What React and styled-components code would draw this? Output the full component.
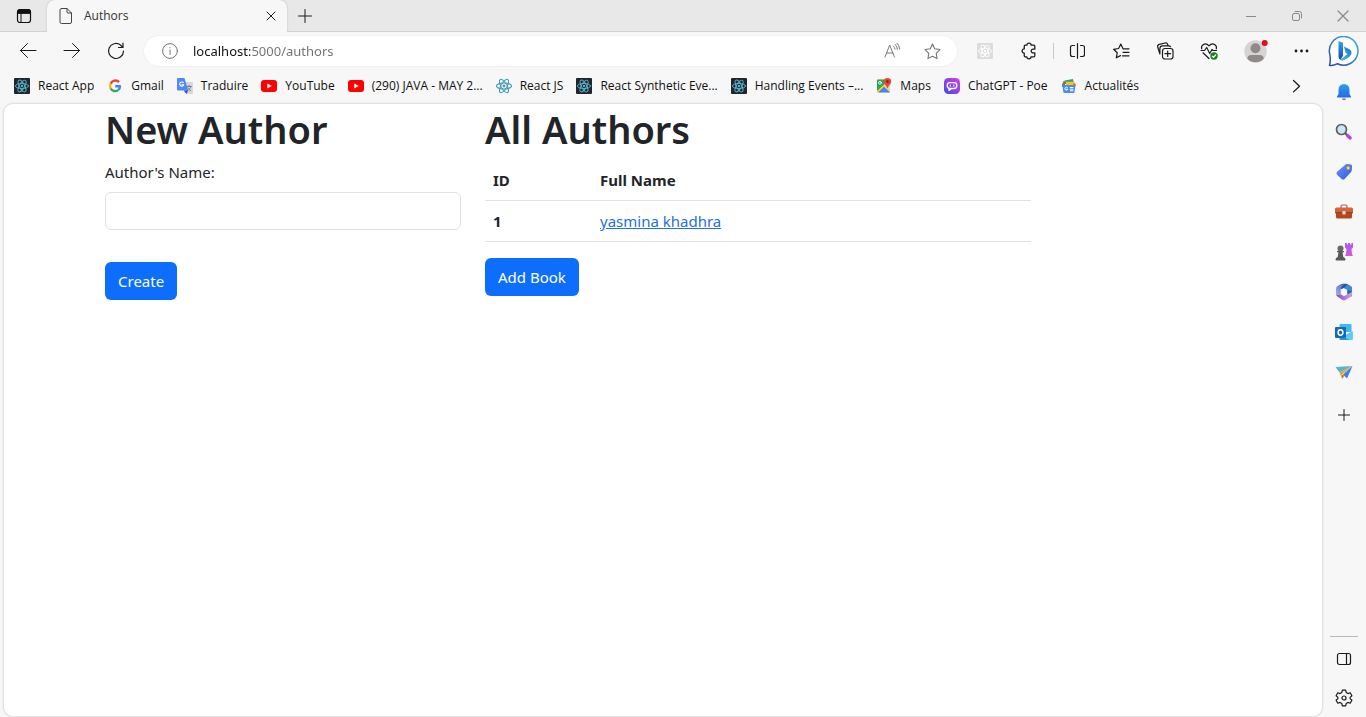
import React, { useState } from "react";
import styled, { createGlobalStyle } from "styled-components";

const GlobalStyle = createGlobalStyle`
  *, *::before, *::after { box-sizing: border-box; }
  body {
    margin: 0;
    background: #f7f7f7;
    font-family: "Noto Sans", "Open Sans", sans-serif;
    color: #212529;
  }
  button, input { font: inherit; color: inherit; }
`;

/* ---------- browser frame ---------- */

const Window = styled.div`
  display: flex;
  flex-direction: column;
  min-height: 100vh;
`;

const TitleBar = styled.header`
  display: flex;
  height: 32px;
  background: #e8e8e8;
  box-shadow: inset 0 -1px 0 #d3d3d3;
`;

const IconButton = styled.button`
  display: inline-flex;
  align-items: center;
  justify-content: center;
  flex: none;
  width: ${(p) => p.$width || 44}px;
  height: ${(p) => p.$height || 40}px;
  padding: 0;
  border: 0;
  background: none;
  color: ${(p) => p.$color || "#1b1b1b"};
`;

const Tab = styled.div`
  display: flex;
  align-items: center;
  width: 240px;
  padding: 0 4px 0 11px;
  border-radius: 8px 8px 0 0;
  background: #f7f7f7;
  box-shadow: 0 0 2px #b5b5b5;
  clip-path: inset(0 -3px 0 -3px);
`;

const TabTitle = styled.span`
  flex: 1;
  padding-left: 10px;
  font-family: "Open Sans", sans-serif;
  font-size: 12px;
  line-height: 16px;
  color: #333;
`;

const WindowControls = styled.div`
  display: flex;
  margin-left: auto;
`;

const Body = styled.div`
  display: flex;
  flex: 1;
`;

const Main = styled.div`
  display: flex;
  flex-direction: column;
  flex: 1;
  min-width: 0;
`;

const Toolbar = styled.nav`
  display: flex;
  align-items: center;
  height: 38px;
  padding-left: 6px;
`;

const AddressBar = styled.div`
  display: flex;
  align-items: center;
  flex: 1;
  min-width: 0;
  height: 30px;
  margin: 0 6px;
  padding: 0 5px 0 18px;
  border-radius: 15px;
  background: #fff;
  box-shadow: 0 0 2px #e2e2e2;
`;

const AddressInput = styled.input`
  flex: 1;
  min-width: 0;
  margin-left: 15px;
  padding: 0;
  border: 0;
  outline: 0;
  font-size: 13px;
  line-height: 20px;
  color: transparent;
  background: linear-gradient(to right, #111 57px, #707070 57px);
  background-clip: text;
`;

const Divider = styled.span`
  width: 1px;
  height: 16px;
  margin: 0 1px 0 2px;
  background: #c8c8c8;
`;

const Bookmarks = styled.nav`
  display: flex;
  align-items: center;
  height: 33px;
  padding: 0 5px 2px 14px;
  gap: 13px;
`;

const Bookmark = styled.a`
  display: flex;
  align-items: center;
  gap: 8px;
  font-family: "Open Sans", sans-serif;
  font-size: 12px;
  line-height: 16px;
  white-space: nowrap;
  color: #111;
  text-decoration: none;
`;

const More = styled.div`
  margin-left: auto;
`;

const Sidebar = styled.aside`
  display: flex;
  flex-direction: column;
  flex: none;
  width: 43px;
`;

const SidebarAdd = styled.div`
  margin-top: 3px;
`;

const SidebarFoot = styled.div`
  display: flex;
  flex-direction: column;
  width: 28px;
  margin: auto 0 0 7px;
  padding-top: 2px;
  border-top: 1px solid #b9b9b9;
  align-items: center;
`;

/* ---------- web page ---------- */

const Viewport = styled.main`
  flex: 1;
  margin-left: 3px;
  border: 1px solid #e2e2e2;
  border-radius: 10px;
  background: #fff;
  box-shadow: 0 0 2px #dedede;
`;

const Container = styled.div`
  display: grid;
  grid-template-columns: 4fr 6fr 2fr;
  max-width: 1140px;
  margin: 0 auto;
`;

const Column = styled.section`
  padding: 0 12px;
`;

const Heading = styled.h1`
  margin: 2px 0 8px;
  font-size: 38px;
  line-height: 46px;
  font-weight: 600;
`;

const Field = styled.div`
  margin-bottom: 32px;
`;

const Label = styled.label`
  display: block;
  margin-bottom: 8px;
  font-size: 15px;
  line-height: 24px;
`;

const TextInput = styled.input`
  display: block;
  width: 100%;
  height: 38px;
  padding: 6px 12px;
  border: 1px solid #dee2e6;
  border-radius: 6px;
  background: #fff;
  font-size: 15px;
`;

const PrimaryButton = styled.button`
  height: 38px;
  padding: 0 13px;
  border: 0;
  border-radius: 6px;
  background: #0d6efd;
  color: #fff;
  font-size: 15px;
  line-height: 24px;
`;

const Table = styled.table`
  width: 100%;
  margin-bottom: 16px;
  border-collapse: collapse;
  table-layout: fixed;
  font-size: 15px;
  line-height: 24px;
`;

const Cell = styled.td`
  width: ${(p) => (p.$narrow ? "107px" : "auto")};
  padding: 8px;
  border-bottom: 1px solid #dee2e6;
  text-align: left;
`;

const AuthorLink = styled.a`
  color: #2470dc;
  text-decoration: underline;
`;

/* ---------- icons ---------- */

function Icon({ size = 16, box = 16, children, ...rest }) {
  return (
    <svg
      width={size}
      height={size}
      viewBox={`0 0 ${box} ${box}`}
      fill="none"
      stroke="currentColor"
      strokeWidth="1"
      strokeLinecap="round"
      strokeLinejoin="round"
      aria-hidden="true"
      {...rest}
    >
      {children}
    </svg>
  );
}

const Atom = ({ color, width = 0.9 }) => (
  <g stroke={color} strokeWidth={width}>
    <ellipse cx="8" cy="8" rx="6.6" ry="2.6" />
    <ellipse cx="8" cy="8" rx="6.6" ry="2.6" transform="rotate(60 8 8)" />
    <ellipse cx="8" cy="8" rx="6.6" ry="2.6" transform="rotate(120 8 8)" />
    <circle cx="8" cy="8" r="1.2" fill={color} stroke="none" />
  </g>
);

const ReactTile = ({ tile = "#20262b", color = "#58b7cf" }) => (
  <Icon>
    <rect width="16" height="16" rx="1" fill={tile} stroke="none" />
    <Atom color={color} />
  </Icon>
);

const ReactPlain = () => (
  <Icon>
    <g stroke="#4a9cb5" strokeWidth="1.1">
      <ellipse cx="8" cy="8" rx="7.5" ry="3" />
      <ellipse cx="8" cy="8" rx="7.5" ry="3" transform="rotate(60 8 8)" />
      <ellipse cx="8" cy="8" rx="7.5" ry="3" transform="rotate(120 8 8)" />
      <circle cx="8" cy="8" r="1.4" fill="#4a9cb5" stroke="none" />
    </g>
  </Icon>
);

const Google = () => (
  <Icon strokeWidth="2.4" strokeLinecap="butt">
    <path d="M12 4.1A5 5 0 0 0 3.7 5.7" stroke="#ea4335" />
    <path d="M3.7 5.7a5 5 0 0 0 0 4.8" stroke="#fbbc05" />
    <path d="M3.7 10.5a5 5 0 0 0 7.4 1.6" stroke="#34a853" />
    <path d="M11.1 12.1A5 5 0 0 0 13 8.2H8.2" stroke="#4285f4" />
  </Icon>
);

const Translate = () => (
  <Icon>
    <path d="M7 4h8.3q.7 0 .7.7v10.6q0 .7-.7.7H9.5z" fill="#d5d8dc" stroke="none" />
    <path d="M9.5 8.5h5M12 7.2v1.3M13.8 8.6c-.5 2-2 3.3-3.4 4M10.8 9.8c.7 1.4 1.8 2.3 3 3" stroke="#6d7c8c" strokeWidth=".9" />
    <path d="M1 0h6.5l3.7 12.5H1q-1 0-1-1V1q0-1 1-1z" fill="#4c8bf5" stroke="none" />
    <path d="M6.6 12.5h4.6L9.5 16z" fill="#2f4fd8" stroke="none" />
    <path d="M6.4 4.7A2.1 2.1 0 1 0 6.8 6.7H4.9" stroke="#fff" strokeWidth="1.1" />
  </Icon>
);

const YouTube = () => (
  <Icon>
    <rect y="2" width="16" height="12" rx="3" fill="#f00" stroke="none" />
    <path d="M6.3 5.4v5.2L10.8 8z" fill="#fff" stroke="none" />
  </Icon>
);

const MapsIcon = () => (
  <Icon stroke="none">
    <path d="M2 1.5h11q1 0 1 1v11q0 1-1 1H2q-1 0-1-1v-11q0-1 1-1z" fill="#fbce3c" />
    <path d="M2 1.5h8.5L8.5 6 1 13V2.5q0-1 1-1z" fill="#2aa55b" />
    <path d="M11.5 7 14 9.5v4L9 8.5z" fill="#d8dadd" />
    <path d="m2 14.5 6-5.700 6 5.700z" fill="#4384f3" />
    <circle cx="4" cy="4.8" r="1.4" fill="none" stroke="#fff" strokeWidth=".9" />
    <path d="M11.5 0a3.7 3.7 0 0 1 3.7 3.700c0 2.800-2.900 3.300-3.400 6.500h-.6C10.700 7 7.800 6.500 7.800 3.700A3.700 3.700 0 0 1 11.500 0z" fill="#de4a3c" />
    <circle cx="11.5" cy="3.6" r="1.3" fill="#7d211b" />
  </Icon>
);

const Poe = () => (
  <Icon>
    <defs>
      <linearGradient id="poe" x1="0" y1="1" x2="1" y2="0">
        <stop offset="0" stopColor="#3e4fe0" />
        <stop offset=".5" stopColor="#8f41e8" />
        <stop offset="1" stopColor="#d343dc" />
      </linearGradient>
    </defs>
    <rect width="16" height="16" rx="4.5" fill="url(#poe)" stroke="none" />
    <rect x="3.2" y="4.7" width="9.6" height="5.8" rx="2.7" stroke="#fff" strokeWidth="1.3" />
    <path d="M6.3 7.1v1M9.7 7.1v1M5 11v1.6l2-1.6" stroke="#fff" strokeWidth="1.2" />
  </Icon>
);

const News = () => (
  <Icon stroke="none">
    <path d="M2 6V3.5L5 3v3z" fill="#e5483a" />
    <path d="m3.5 2.5 8.5-1.500 1 5H4z" fill="#2fa65a" />
    <path d="M5 3.8h8.500V7H5z" fill="#fbc02f" />
    <path d="M1 5.500h3V9H1z" fill="#3c9c5c" />
    <path d="M12.500 5.500h2V8h-2z" fill="#e5483a" />
    <path d="M1.500 7h13L13.500 14q-.2 1-1 1h-9q-1 0-1.200-1z" fill="#4b89ee" />
    <path d="M6.600 9.700a1.500 1.500 0 1 0 .2 1.600H5.500M9.300 9.500H12M9.300 11.200H12M9.300 12.800H12" fill="none" stroke="#fff" />
  </Icon>
);

const Workspaces = () => (
  <Icon>
    <rect x="1.5" y="1.5" width="13" height="13" rx="2.5" stroke="#111" strokeWidth="1.2" />
    <path d="M1.5 5V4q0-2.500 2.500-2.500h8q2.500 0 2.500 2.500v1z" fill="#111" stroke="#111" />
    <path d="M5 5v9.300" stroke="#111" />
  </Icon>
);

const FileIcon = () => (
  <Icon stroke="#444">
    <path d="M3.500.5h5.500l4.500 4.500v9q0 1.500-1.500 1.500H3.500Q2 15.500 2 14V2Q2 .5 3.500.5zM9 .5V4q0 1 1 1h3.500" />
  </Icon>
);

const Close = ({ size = 16 }) => (
  <Icon size={size}><path d="m4 4 8 8M12 4l-8 8" /></Icon>
);
const Plus = () => <Icon><path d="M8 1.500v13M1.500 8h13" /></Icon>;
const SmallPlus = () => <Icon><path d="M8 2.500v11M2.500 8h11" /></Icon>;
const Back = () => <Icon size={18} box={18}><path d="M17 8.500H1.500M8.500 1.500l-7 7 7 7" /></Icon>;
const Forward = () => <Icon size={18} box={18}><path d="M1 8.500h15.500M9.500 1.500l7 7-7 7" /></Icon>;
const Reload = () => (
  <Icon size={18} box={18} strokeWidth="1.2"><path d="M16.500 9A7.500 7.500 0 1 1 13.500 3l2.200 2.300M16 1v4.500h-4.500" /></Icon>
);
const Info = () => (
  <Icon size={16} stroke="#747474"><circle cx="8" cy="8" r="7.4" /><path d="M8 7v4.500M8 4.600v.2" /></Icon>
);
const ReadAloud = () => (
  <Icon size={18} box={18} stroke="#777"><path d="m2 15 4.700-12L11.400 15M3.500 11h6.400M10.500 4q1.400 1.200 1.500 3.200M12.300 2.500q2 1.900 2.100 4.900M14 1.200q2.500 2.300 2.600 5.800" /></Icon>
);
const star = "m8 1 2.100 4.500 4.900.7-3.500 3.500.8 5L8 12.400l-4.300 2.300.8-5L1 6.200l4.900-.7z";
const Star = () => <Icon size={17} stroke="#747474"><path d={star} /></Icon>;
const Puzzle = () => (
  <Icon size={18} box={17} strokeWidth="1.2">
    <path d="M5 3h1.500a2 2 0 1 1 4 0H13q1 0 1 1v2.800h-1.200a1.800 1.800 0 1 0 0 3.500H14V13q0 1-1 1h-2.600a2 2 0 1 1-4 0H5q-1 0-1-1v-2.500a2 2 0 1 1 0-4V4q0-1 1-1z" />
  </Icon>
);
const Split = () => (
  <Icon strokeWidth="1.2"><path d="M8.500.7v14.600M5.500 2.500h-2Q1.500 2.500 1.500 4.500v7q0 2 2 2h2M11.500 2.500h2q2 0 2 2v7q0 2-2 2h-2" /></Icon>
);
const Favorites = () => (
  <Icon size={18} box={18} strokeWidth="1.2"><path d="M17 6.800h-6L8.800 2 6.600 6.500l-5 .8 3.600 3.500-.9 5 4.200-2.200M11 10.300h6M10.500 13.800H17" /></Icon>
);
const Collections = () => (
  <Icon size={18} box={18} strokeWidth="1.2">
    <rect x="6.5" y="6.5" width="10.5" height="10.5" rx="2.5" />
    <path d="M11.700 9v5.500M9 11.700h5.500M3.900 12 1.700 5Q1.200 3 3.200 2.400l6-1.400q1.900-.3 2.500 1.500l.3 1M3.900 12V6.500q0-2.700 2.700-2.700h6.100q1.300 0 1.800.9" />
  </Icon>
);
const Health = () => (
  <Icon size={18} box={18} strokeWidth="1.2">
    <path d="M1.700 6.800C.7 3.500 5-.5 9 3.800c4-4.300 8.300-.3 7.300 3M1 8.500h3.500L6.700 5.500l3 6L12 7.500l1 1h3.500M3 10.800l6 5.700" />
    <circle cx="14" cy="14" r="3.7" fill="#16801a" stroke="none" />
    <path d="m12.400 14.200 1.200 1.100 2-2.300" stroke="#fff" />
  </Icon>
);
const Profile = () => (
  <Icon size={26} box={26} stroke="none">
    <circle cx="13.5" cy="13.5" r="11.2" fill="#d6d4d3" />
    <circle cx="13.5" cy="10.3" r="5" fill="#8d8a89" />
    <path d="M5.300 20.800q.3-3.700 4-3.700h8.400q3.700 0 4 3.700a11.200 11.200 0 0 1-16.400 0z" fill="#8d8a89" />
    <circle cx="22.7" cy="5" r="3" fill="#e20b16" />
  </Icon>
);
const Dots = () => (
  <Icon stroke="none" fill="currentColor"><circle cx="3" cy="8" r="1.4" /><circle cx="8.5" cy="8" r="1.4" /><circle cx="14" cy="8" r="1.4" /></Icon>
);
const Chevron = () => <Icon strokeWidth="1.3"><path d="m5.500 2.500 6 5.700-6 5.700" /></Icon>;
const Minimize = () => <Icon><path d="M3 8.500h10" strokeLinecap="butt" /></Icon>;
const Restore = () => (
  <Icon><rect x="3.5" y="5.5" width="7" height="7" rx="1.5" /><path d="M6 3.500h4.500q2 0 2 2V10" /></Icon>
);

const Bing = () => (
  <Icon size={32} box={32}>
    <defs>
      <linearGradient id="ring" x1="1" y1="0" x2="0" y2="1">
        <stop offset="0" stopColor="#38b4e5" /><stop offset="1" stopColor="#2746a6" />
      </linearGradient>
      <linearGradient id="bstem" x1="0" y1="0" x2="0" y2="1">
        <stop offset="0" stopColor="#2ba8ee" /><stop offset="1" stopColor="#1740bd" />
      </linearGradient>
      <linearGradient id="bbowl" x1="1" y1="0" x2="0" y2="1">
        <stop offset="0" stopColor="#2369d8" /><stop offset="1" stopColor="#35d1c9" />
      </linearGradient>
    </defs>
    <path d="M16 .5a14.300 14.300 0 1 1-6.500 27.200Q5 30 1.500 29.300 2.800 26 2 19A14.300 14.300 0 0 1 16 .5z" fill="#fff" stroke="url(#ring)" strokeWidth="1.5" />
    <path d="m10.500 5 4.500 1.800V19.500l-2.300 4.200Q10.500 23 10.500 20.500z" fill="url(#bstem)" stroke="none" />
    <path d="m16 10.500 5.500 2.700q2.800 1.600 1.700 5.100-.7 2-3 3.400l-4.500 2.600q-1.800.9-3.500-.3L19.500 18l-2-1.200z" fill="url(#bbowl)" stroke="none" />
  </Icon>
);

const Bell = () => (
  <Icon size={18} box={18} stroke="none">
    <defs><linearGradient id="bell" x1="0" y1="0" x2="0" y2="1"><stop offset="0" stopColor="#28a1e9" /><stop offset="1" stopColor="#2867e5" /></linearGradient></defs>
    <path d="M9 1a5.500 5.500 0 0 1 5.500 5.500v4.500l1.500 2.500q.3 1-.7 1H2.700q-1 0-.7-1L3.500 11V6.500A5.500 5.500 0 0 1 9 1z" fill="url(#bell)" />
    <path d="M6.800 15.500h4.400Q10.500 17.200 9 17.200t-2.200-1.700z" fill="#697681" />
  </Icon>
);
const Search = () => (
  <Icon size={18} box={18}>
    <path d="m10.500 10.500 1.700 1.700" stroke="#555" strokeWidth="2" />
    <path d="m12.500 12.500 2.700 2.500" stroke="#bb3edf" strokeWidth="3.2" />
    <circle cx="6.500" cy="6.500" r="5" fill="#c9e7f8" stroke="#5b6064" strokeWidth="1.7" />
  </Icon>
);
const Tag = () => (
  <Icon size={18} box={18} stroke="none">
    <defs><linearGradient id="tag" x1="0" y1="0" x2="1" y2="1"><stop offset="0" stopColor="#6b97ff" /><stop offset="1" stopColor="#3157dc" /></linearGradient></defs>
    <path d="M10 2q1-1 2.300-.9l3.500.4q1.200.1 1.200 1.400L16.800 7q0 1.200-1 2.200l-6 6.500q-1.600 1.700-3.200.2l-4.500-4.100q-1.500-1.500 0-3z" fill="url(#tag)" />
    <circle cx="13.3" cy="5" r="1.7" fill="#ffe27b" stroke="#bb8a28" strokeWidth=".6" />
  </Icon>
);
const Toolbox = () => (
  <Icon size={18} box={18} stroke="none">
    <path d="M6 5V3.500Q6 2 7.500 2h3Q12 2 12 3.500V5" fill="none" stroke="#6c7580" strokeWidth="1.2" />
    <rect y="4.5" width="18" height="6" rx="1.5" fill="#db6237" />
    <path d="M1 10h16v4q0 1.500-1.500 1.500h-13Q1 15.500 1 14z" fill="#b9451f" />
    <path d="M0 9.500h18" stroke="#8e3519" strokeWidth=".8" />
    <rect x="7.3" y="8" width="3.4" height="3.6" rx="1" fill="#dadce0" />
  </Icon>
);
const Chess = () => (
  <Icon size={20} box={20} stroke="none">
    <defs><linearGradient id="rook" x1="0" y1="0" x2="0" y2="1"><stop offset="0" stopColor="#a35cf2" /><stop offset="1" stopColor="#dd54df" /></linearGradient></defs>
    <path d="M11 1h1.800v1.500h1.300V1h2v1.500h1.400V1H19v4.500L17.500 7l.5 5 1 2h-8l1-2 .5-5L11 5.500z" fill="url(#rook)" />
    <circle cx="6.5" cy="6.5" r="3" fill="#676767" />
    <path d="M3 9h7v1.300H8.500l.8 4.700q2.200.5 2.200 2.500 0 1-1 1h-8q-1 0-1-1Q1.500 15.500 3.700 15l.8-4.700H3z" fill="#595959" />
  </Icon>
);
const M365 = () => (
  <Icon size={18} box={18} stroke="none">
    <defs>
      <linearGradient id="m365left" x1="1" y1="0" x2="0" y2="1"><stop offset="0" stopColor="#4a5cc9" /><stop offset="1" stopColor="#aab8f2" /></linearGradient>
      <linearGradient id="m365foot" x1="0" y1="0" x2="1" y2="0"><stop offset="0" stopColor="#8b48c4" /><stop offset="1" stopColor="#c5a4ec" /></linearGradient>
    </defs>
    <path d="M8.500.7h3l4.300 2.500q1.200.8 1.200 2.200V12q0 1-1 1.700l-3.700-2.200V6.800L9 5 5.500 6.500V4.300Z" fill="#245a9e" />
    <path d="M12.300 6.800 9 5l3.500-3.800 3.300 2q1.200.8 1.200 2.200V9z" fill="#3c8bd6" />
    <path d="M9.500.7 6.500 4q-.8 1-.8 2.300v5.200L3 13.500q-2-.7-2-2.600V5.600q0-1.500 1.200-2.300L6.300.9Q7 .5 9.500.7z" fill="url(#m365left)" />
    <path d="M5.700 11.300 9 13.200l3.300-1.900L17 9v2.500q0 1.500-1.200 2.300l-5 3q-1.800 1-3.600 0L3 14q-1.600-1-1.800-2.500 2 1.500 4.500-.2z" fill="url(#m365foot)" />
  </Icon>
);
const Outlook = () => (
  <Icon size={18} box={18} stroke="none">
    <path d="M5.500 1h10q1 0 1 1v7h-12V2q0-1 1-1z" fill="#42b8ed" />
    <path d="M4.500 4h6v5h-6z" fill="#176eb7" />
    <path d="m4.500 9 6.500 3 6.500-3.500V16q0 1-1 1h-11q-1 0-1-1z" fill="#2598dd" />
    <path d="m17.500 8.500-9 5.500 6 3h2q1 0 1-1z" fill="#58cff0" />
    <rect x="0" y="4" width="11" height="11" rx="1" fill="#116bb8" />
    <ellipse cx="5.5" cy="9.5" rx="2.4" ry="2.7" fill="none" stroke="#fff" strokeWidth="1.5" />
  </Icon>
);
const Drop = () => (
  <Icon size={18} box={18} stroke="none">
    <path d="M.5 4 17.500 3 4.500 9.500z" fill="#54b6d5" />
    <path d="m4.500 9.500 13-6.500L7 11.500v4.500z" fill="#eca52d" />
    <path d="m8 11.500 9.500-8.500L12 15.500z" fill="#3d7ef1" />
    <path d="m7 11.500 2.500 1.200L7 16z" fill="#bd7f26" />
  </Icon>
);
const Panel = () => (
  <Icon strokeWidth="1.2"><rect x="1.5" y="2.5" width="13" height="11" rx="2" /><path d="M10.500 2.500v11" /></Icon>
);
const Settings = () => (
  <Icon size={18} box={18} strokeWidth="1.2">
    <path d="M7.300 1.200h3.400l.5 2.400 1.700 1 2.300-.8 1.700 3-1.800 1.600v1.200l1.800 1.600-1.700 3-2.300-.8-1.700 1-.5 2.400H7.300l-.5-2.400-1.700-1-2.300.8-1.700-3 1.800-1.600V8.400L1.100 6.800l1.700-3 2.300.8 1.700-1z" />
    <circle cx="9" cy="9" r="2" />
  </Icon>
);

/* ---------- data ---------- */

const bookmarks = [
  { label: "React App", icon: <ReactTile /> },
  { label: "Gmail", icon: <Google /> },
  { label: "Traduire", icon: <Translate /> },
  { label: "YouTube", icon: <YouTube /> },
  { label: "(290) JAVA - MAY 2...", icon: <YouTube /> },
  { label: "React JS", icon: <ReactPlain /> },
  { label: "React Synthetic Eve...", icon: <ReactTile /> },
  { label: "Handling Events –...", icon: <ReactTile /> },
  { label: "Maps", icon: <MapsIcon /> },
  { label: "ChatGPT - Poe", icon: <Poe /> },
  { label: "Actualités", icon: <News /> },
];

const sidebarApps = [
  { label: "Notifications", icon: <Bell /> },
  { label: "Search", icon: <Search /> },
  { label: "Shopping", icon: <Tag /> },
  { label: "Tools", icon: <Toolbox /> },
  { label: "Games", icon: <Chess /> },
  { label: "Microsoft 365", icon: <M365 /> },
  { label: "Outlook", icon: <Outlook /> },
  { label: "Drop", icon: <Drop /> },
];

const authors = [{ id: 1, name: "yasmina khadhra" }];

export default function App() {
  const [address, setAddress] = useState("localhost:5000/authors");
  const [name, setName] = useState("");

  return (
    <Window>
      <GlobalStyle />
      <TitleBar>
        <IconButton $width={47} $height={32} aria-label="Workspaces"><Workspaces /></IconButton>
        <Tab>
          <FileIcon />
          <TabTitle>Authors</TabTitle>
          <IconButton $width={24} $height={24} aria-label="Close tab"><Close /></IconButton>
        </Tab>
        <IconButton $width={35} $height={32} aria-label="New tab"><Plus /></IconButton>
        <WindowControls>
          <IconButton $width={46} $height={32} $color="#8a8a8a" aria-label="Minimize"><Minimize /></IconButton>
          <IconButton $width={46} $height={32} $color="#8a8a8a" aria-label="Restore"><Restore /></IconButton>
          <IconButton $width={46} $height={32} $color="#8a8a8a" aria-label="Close"><Close size={20} /></IconButton>
        </WindowControls>
      </TitleBar>

      <Body>
        <Main>
          <Toolbar aria-label="Navigation">
            <IconButton aria-label="Back"><Back /></IconButton>
            <IconButton aria-label="Forward"><Forward /></IconButton>
            <IconButton aria-label="Refresh"><Reload /></IconButton>
            <AddressBar>
              <Info />
              <AddressInput aria-label="Address" value={address} onChange={(e) => setAddress(e.target.value)} />
              <IconButton $width={40} $height={30} aria-label="Read aloud"><ReadAloud /></IconButton>
              <IconButton $width={40} $height={30} aria-label="Add to favorites"><Star /></IconButton>
            </AddressBar>
            <IconButton aria-label="React Developer Tools"><ReactTile tile="#dcdcdc" color="#fff" /></IconButton>
            <IconButton aria-label="Extensions"><Puzzle /></IconButton>
            <Divider />
            <IconButton aria-label="Split screen"><Split /></IconButton>
            <IconButton aria-label="Favorites"><Favorites /></IconButton>
            <IconButton aria-label="Collections"><Collections /></IconButton>
            <IconButton aria-label="Browser essentials"><Health /></IconButton>
            <IconButton $width={48} aria-label="Profile"><Profile /></IconButton>
            <IconButton aria-label="Settings and more"><Dots /></IconButton>
          </Toolbar>

          <Bookmarks aria-label="Favorites bar">
            {bookmarks.map((b) => (
              <Bookmark key={b.label} href="#">{b.icon}{b.label}</Bookmark>
            ))}
            <More>
              <IconButton $height={30} aria-label="More favorites"><Chevron /></IconButton>
            </More>
          </Bookmarks>

          <Viewport>
            <Container>
              <Column>
                <Heading>New Author</Heading>
                <form onSubmit={(e) => e.preventDefault()}>
                  <Field>
                    <Label htmlFor="author-name">Author's Name:</Label>
                    <TextInput id="author-name" value={name} onChange={(e) => setName(e.target.value)} />
                  </Field>
                  <PrimaryButton type="submit">Create</PrimaryButton>
                </form>
              </Column>
              <Column>
                <Heading>All Authors</Heading>
                <Table>
                  <thead>
                    <tr>
                      <Cell as="th" scope="col" $narrow>ID</Cell>
                      <Cell as="th" scope="col">Full Name</Cell>
                    </tr>
                  </thead>
                  <tbody>
                    {authors.map((a) => (
                      <tr key={a.id}>
                        <Cell as="th" scope="row" $narrow>{a.id}</Cell>
                        <Cell><AuthorLink href="#">{a.name}</AuthorLink></Cell>
                      </tr>
                    ))}
                  </tbody>
                </Table>
                <PrimaryButton type="button">Add Book</PrimaryButton>
              </Column>
            </Container>
          </Viewport>
        </Main>

        <Sidebar>
          <IconButton $width={42} aria-label="Bing"><Bing /></IconButton>
          {sidebarApps.map((a) => (
            <IconButton key={a.label} $width={42} aria-label={a.label}>{a.icon}</IconButton>
          ))}
          <SidebarAdd>
            <IconButton $width={42} aria-label="Customize"><SmallPlus /></IconButton>
          </SidebarAdd>
          <SidebarFoot>
            <IconButton $width={42} aria-label="Toggle sidebar"><Panel /></IconButton>
            <IconButton $width={42} $height={38} aria-label="Settings"><Settings /></IconButton>
          </SidebarFoot>
        </Sidebar>
      </Body>
    </Window>
  );
}
